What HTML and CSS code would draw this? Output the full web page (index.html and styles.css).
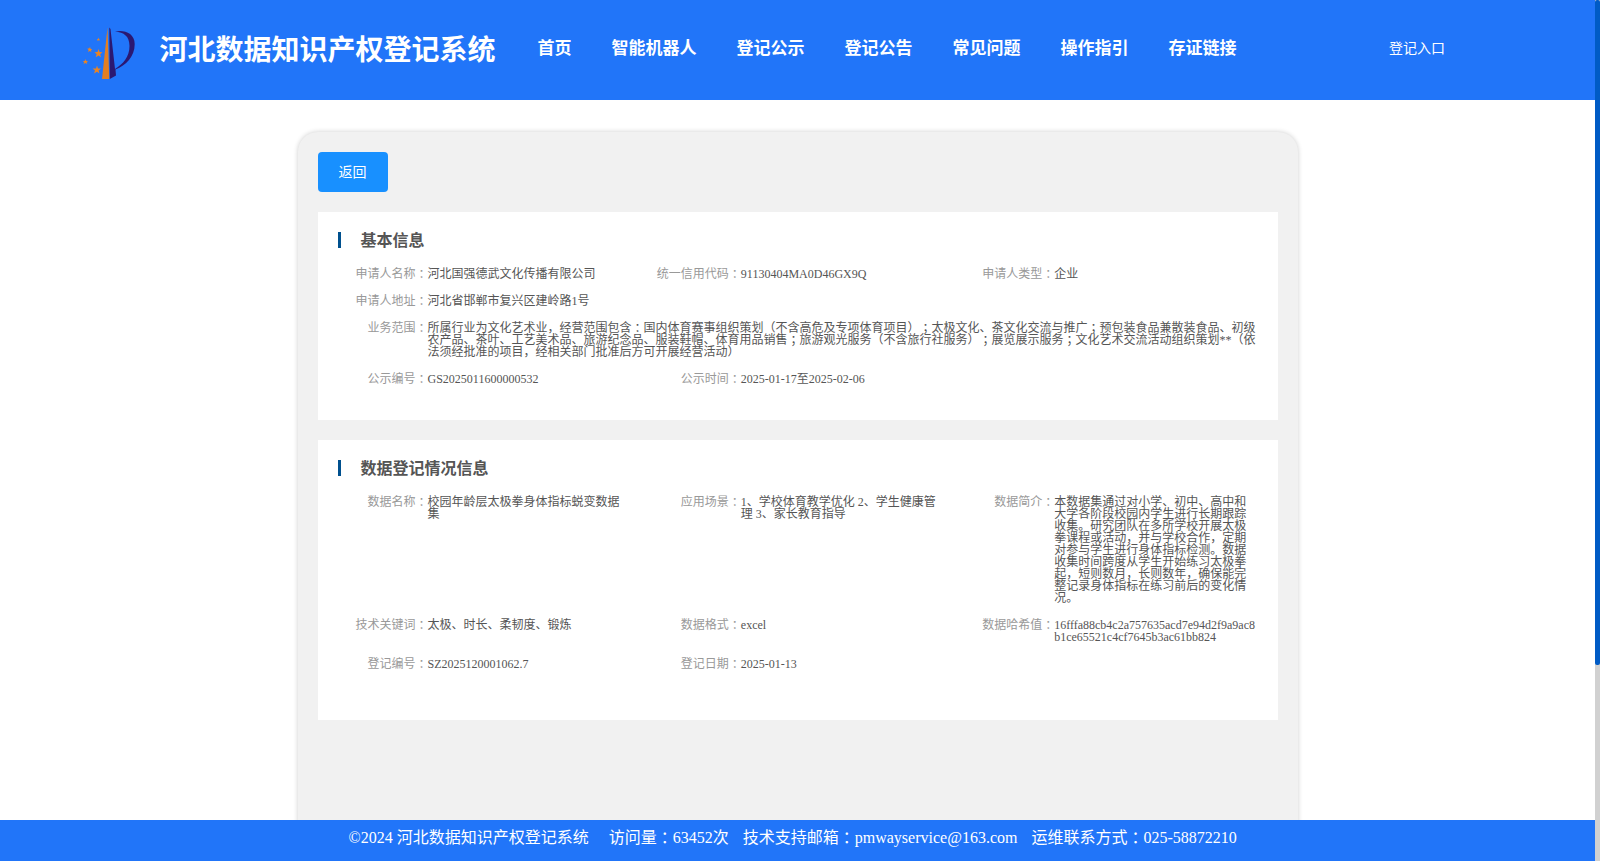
FILE: index.html
```
<!DOCTYPE html>
<html lang="zh-CN">
<head>
  <meta charset="UTF-8">
  <meta name="viewport" content="width=device-width, initial-scale=1.0">
  <title>河北数据知识产权登记系统</title>
  <link rel="stylesheet" href="styles.css">
</head>
<body>
  <div class="page">
    <header class="header">
      <svg class="logo" width="60" height="60" viewBox="0 0 60 60">
        <path fill="#e37f22" d="M27.500 7.500L29.300 59H22z"/>
        <path fill="#2b1871" d="M29.300 7.500L30.500 9L35 49C43 44 49.500 37 49.500 26C49.500 16.500 44 12 35 11.500C44 9.500 54.700 13 54.700 24C54.700 37 46 45 35.500 49.500L36 55.500L29.800 59z"/>
        <g fill="#e98424">
          <path d="M18.500 29L19.500 32L22.500 32.200L20.200 34.200L21 37.300L18.500 35.500L15.700 37.300L16.700 34.200L14.500 32.200L17.500 32z"/>
          <path d="M17 45.500L18 48.500L21 48.500L18.600 50.500L19.400 53.500L17 51.700L14 53.500L15 50.500L12.500 48.500L16 48.500z"/>
          <path d="M10 27L10.700 29H12.300L11 30.200L11.500 32L9.800 31L8 32L8.600 30.200L7.300 28.500H9.200z"/>
          <path d="M5.500 39L6.200 41H8L6.700 42.200L7.200 44L5.400 43L3.500 44L4.200 42.200L2.800 41H4.700z"/>
          <path d="M18.500 17.500L19 19H20L19.200 19.800L19.500 21L18.300 20.200L17.200 21L17.600 19.700L16.800 19H18z"/>
        </g>
      </svg>
      <h1 class="system-name">河北数据知识产权登记系统</h1>
      <nav class="nav">
        <a>首页</a>
        <a>智能机器人</a>
        <a>登记公示</a>
        <a>登记公告</a>
        <a>常见问题</a>
        <a>操作指引</a>
        <a>存证链接</a>
      </nav>
      <a class="entry">登记入口</a>
    </header>

    <main class="content">
      <button class="back">返回</button>

      <section class="box">
        <h2>基本信息</h2>
        <div class="info">
          <div class="item"><label>申请人名称<i lang="ja">：</i></label><span>河北国强德武文化传播有限公司</span></div>
          <div class="item"><label>统一信用代码<i lang="ja">：</i></label><span>91130404MA0D46GX9Q</span></div>
          <div class="item"><label>申请人类型<i lang="ja">：</i></label><span>企业</span></div>
          <div class="item full"><label>申请人地址<i lang="ja">：</i></label><span>河北省邯郸市复兴区建岭路1号</span></div>
          <div class="item full"><label>业务范围<i lang="ja">：</i></label><span>所属行业为文化艺术业，经营范围包含<i lang="ja">：</i>国内体育赛事组织策划（不含高危及专项体育项目）<i lang="ja">；</i>太极文化、茶文化交流与推广<i lang="ja">；</i>预包装食品兼散装食品、初级农产品、茶叶、工艺美术品、旅游纪念品、服装鞋帽、体育用品销售<i lang="ja">；</i>旅游观光服务（不含旅行社服务）<i lang="ja">；</i>展览展示服务<i lang="ja">；</i>文化艺术交流活动组织策划**（依法须经批准的项目，经相关部门批准后方可开展经营活动）</span></div>
          <div class="item"><label>公示编号<i lang="ja">：</i></label><span>GS2025011600000532</span></div>
          <div class="item"><label>公示时间<i lang="ja">：</i></label><span>2025-01-17至2025-02-06</span></div>
        </div>
      </section>

      <section class="box box-data">
        <h2>数据登记情况信息</h2>
        <div class="info">
          <div class="item"><label>数据名称<i lang="ja">：</i></label><span>校园年龄层太极拳身体指标蜕变数据集</span></div>
          <div class="item"><label>应用场景<i lang="ja">：</i></label><span>1、学校体育教学优化 2、学生健康管理 3、家长教育指导</span></div>
          <div class="item"><label>数据简介<i lang="ja">：</i></label><span>本数据集通过对小学、初中、高中和大学各阶段校园内学生进行长期跟踪收集。研究团队在多所学校开展太极拳课程或活动，并与学校合作，定期对参与学生进行身体指标检测。数据收集时间跨度从学生开始练习太极拳起，短则数月，长则数年，确保能完整记录身体指标在练习前后的变化情况。</span></div>
          <div class="item"><label>技术关键词<i lang="ja">：</i></label><span>太极、时长、柔韧度、锻炼</span></div>
          <div class="item"><label>数据格式<i lang="ja">：</i></label><span>excel</span></div>
          <div class="item"><label>数据哈希值<i lang="ja">：</i></label><span>16fffa88cb4c2a757635acd7e94d2f9a9ac8b1ce65521c4cf7645b3ac61bb824</span></div>
          <div class="item"><label>登记编号<i lang="ja">：</i></label><span>SZ2025120001062.7</span></div>
          <div class="item"><label>登记日期<i lang="ja">：</i></label><span>2025-01-13</span></div>
        </div>
      </section>
    </main>

    <footer class="footer">
      <span class="copyright">©2024 河北数据知识产权登记系统</span>
      <span>访问量<i lang="ja">：</i>63452次</span>
      <span>技术支持邮箱<i lang="ja">：</i>pmwayservice@163.com</span>
      <span>运维联系方式<i lang="ja">：</i>025-58872210</span>
    </footer>
  </div>

  <div class="scrollbar"><div class="thumb"></div></div>
</body>
</html>
```
FILE: styles.css
```
* {
  margin: 0;
  padding: 0;
  box-sizing: border-box;
}

body {
  display: flex;
  height: 100vh;
  overflow: hidden;
  background: #fff;
  font-family: "Liberation Serif", "Noto Sans CJK SC", serif;
  text-spacing-trim: space-all;
}

/* centred full-width colon and semicolon */
i {
  font-family: "Liberation Serif", "Noto Sans CJK JP", serif;
  font-style: normal;
  line-height: 0;
  vertical-align: -1px;
}

.page {
  flex: 1;
  display: flex;
  flex-direction: column;
  height: 100vh;
}

/* header */
.header {
  display: flex;
  flex-shrink: 0;
  height: 100px;
  padding-left: 80px;
  background: #2175f9;
  color: #fff;
  white-space: nowrap;
}

.logo {
  margin-top: 20px;
}

.system-name {
  width: 336px;
  margin-left: 19.5px;
  font-size: 28px;
  line-height: 101px;
}

.nav {
  display: flex;
  gap: 40px;
  margin-left: 42px;
  font-size: 17px;
  font-weight: bold;
  line-height: 97px;
}

.entry {
  margin-left: auto;
  margin-right: 150px;
  font-size: 14px;
  line-height: 98px;
}

/* content */
.content {
  flex: 1;
  min-height: 0;
  width: 1000px;
  margin: 32px auto -10px;
  padding: 20px;
  background: #f1f1f1;
  border-radius: 20px 20px 0 0;
  box-shadow: 0 0 5px rgba(0, 0, 0, 0.2);
}

.back {
  display: block;
  width: 70px;
  height: 40px;
  padding-bottom: 2px;
  border: none;
  border-radius: 4px;
  background: #1890ff;
  color: #fff;
  font-family: inherit;
  font-size: 14px;
}

.box {
  height: 208px;
  margin-top: 20px;
  padding: 20px 0 20px 20px;
  background: #fff;
}

.box-data {
  height: 280px;
}

.box h2 {
  height: 16px;
  margin-bottom: 20px;
  padding-left: 20px;
  border-left: 3px solid #00508e;
  color: #555;
  font-size: 16px;
  line-height: 18px;
}

.info {
  display: grid;
  grid-template-columns: repeat(3, 1fr);
  row-gap: 15px;
  font-size: 12px;
  line-height: 12px;
}

.item {
  display: flex;
  min-width: 0;
  padding-right: 20px;
}

.full {
  grid-column: 1 / -1;
}

.item label {
  flex: 0 0 90px;
  color: #999;
  text-align: right;
}

.item span {
  min-width: 0;
  color: #555;
  word-break: break-all;
}

/* footer */
.footer {
  position: relative;
  display: flex;
  flex-shrink: 0;
  gap: 14px;
  height: 41px;
  padding-left: 348.5px;
  background: #2175f9;
  color: #fff;
  font-size: 16px;
  line-height: 36px;
  white-space: nowrap;
}

.copyright {
  margin-right: 6px;
}

.scrollbar {
  width: 5px;
  background: #d1d1d1;
}

.thumb {
  height: 665px;
  border-radius: 2px;
  background: #005bc5;
}
```
